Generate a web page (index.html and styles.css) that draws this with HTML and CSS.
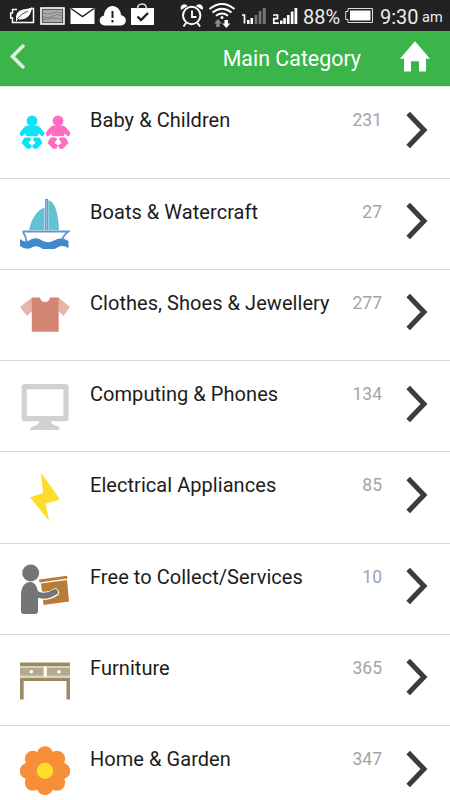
FILE: index.html
```html
<!DOCTYPE html>
<html lang="en">
<head>
<meta charset="utf-8">
<title>Main Category</title>
<link rel="stylesheet" href="styles.css">
</head>
<body>
<svg class="defs" width="0" height="0">
  <symbol id="chevron" viewBox="0 0 22 38"><path d="M2.200 2.500 18 19 2.200 35.500" fill="none" stroke="#3c3c3c" stroke-width="5"/></symbol>
  <symbol id="baby" viewBox="0 0 25 50">
    <circle cx="12" cy="13.800" r="5.400"/>
    <path d="M8 18.500h8q2.500 0 4 2l5 6-2.500 3-4.500-3v2.200q-6 1.300-12 0v-2.200l-4.500 3-2.500-3 5-6q1.500-2 4-2z"/>
    <path d="M4 31q3.500-1.500 6.500 0l.5 1.500-2.500 3.500 3.500 2.500-1.500 3.300H7L1.500 36zM20 31q-3.500-1.500-6.500 0l-.5 1.500 2.500 3.500-3.500 2.500 1.500 3.300H17l5.500-5.800z"/>
  </symbol>
</svg>
<div class="status">
  <svg class="tray" width="160" height="31" viewBox="0 0 160 31">
    <path d="M17 9.500H12.500V13H10.700v5h1.800v4.500h21V8.500H31" fill="none" stroke="#fff" stroke-width="1.500"/>
    <path d="M16 20q-1-9 7-10.500 5-.5 9-2-1 7-5 10-4 3-9 1.500l-2 3z" fill="#fff"/><path d="M17 19q5-6 11-8" fill="none" stroke="#222" stroke-width=".8"/>
    <rect x="41" y="8" width="23" height="16" fill="#555" stroke="#fff" stroke-width="1.600"/>
    <path d="M43 10h19v12H43z" fill="#aaa"/><path d="M43 13q5 2 10 0t9 0M43 17q5 2 10-1t9 0M43 20q8-3 19-1" fill="none" stroke="#777" stroke-width=".8"/>
    <path d="M70.500 8h24v16h-24z" fill="#fff"/><path d="m71 8.500 11.500 8 11.500-8" fill="none" stroke="#222" stroke-width="1.500"/>
    <path d="M105 25.500c-7 0-7-9-1-10 0-5 4-9.500 8.500-9.500s8.500 4.500 8.500 9c7 1.500 6 10.500 0 10.500z" fill="#fff"/><path d="M112.500 11v7M112.500 20v2.500" stroke="#222" stroke-width="2"/>
    <path d="M131 8h23v17h-23z" fill="#fff"/><path d="M137.500 9q0-5 4.500-5t4.500 5" fill="none" stroke="#ddd" stroke-width="1.600"/><path d="m137.500 16.500 3.500 3.500 7-7" fill="none" stroke="#222" stroke-width="2.400"/>
  </svg>
  <svg class="signal" width="142" height="31" viewBox="160 0 142 31">
    <circle cx="191.700" cy="15.500" r="8.700" fill="none" stroke="#fff" stroke-width="2"/><path d="M192 10.500V17h4.500" fill="none" stroke="#fff" stroke-width="1.800"/>
    <path d="M181 10q-1.500-4 2-5.500 3-1 4.500 1.500zM202.500 10q1.500-4-2-5.500-3-1-4.500 1.500z" fill="#fff"/><path d="m186 23-2.500 3.500M197.500 23l2.500 3.500" stroke="#fff" stroke-width="2"/>
    <path d="M209.500 9q12.500-10 25 0M212.500 12.500q9.500-7.500 19 0M216 15.800q6-4.500 12 0" fill="none" stroke="#fff" stroke-width="2"/><circle cx="222" cy="17.500" r="1.500" fill="#fff"/>
    <path d="m218 19 4 4.500h-2.300V27h-3.400v-3.500H214z" fill="#888"/><path d="M224.500 20h3.500v3.500h2.300l-4 4.500-4-4.500h2.200z" fill="#fff"/>
    <path d="M242 15h2.500v8.500" fill="none" stroke="#fff" stroke-width="1.700"/><path d="M247 20h2.500v4H247zM250.500 18h2.500v6h-2.500z" fill="#fff"/><path d="M254.600 15h2.700v9h-2.700zM258.700 11h2.700v13h-2.700zM262.800 8h3v16h-3z" fill="#777"/>
    <path d="M273 15h4.500v3.700h-3.700v4.500h5" fill="none" stroke="#fff" stroke-width="1.700"/><path d="M280 20.500h2.500V24H280zM283.300 18h2.500v6h-2.500zM286.900 15h2.700v9h-2.700zM290.800 11.500h2.700V24h-2.700zM294.500 8h2.800v16h-2.800z" fill="#fff"/>
  </svg>
  <span class="percent">88%</span>
  <svg class="battery" width="30" height="31" viewBox="344 0 30 31"><path d="M348 8.500h24.500v14H348v-3h-2.300v-8H348z" fill="none" stroke="#ddd"/><path d="M350 10.500h20.500v10H350z" fill="#fff"/></svg>
  <span class="time">9:30</span><span class="ampm">am</span>
</div>
<header class="header">
  <svg class="back" width="15" height="26" viewBox="0 0 15 26"><path d="M14 2 2.500 13.500l11.500 11.500" fill="none" stroke="#d8f3da" stroke-width="3.600"/></svg>
  <h1 class="title">Main Category</h1>
  <svg class="home" width="30" height="31" viewBox="0 0 30 31"><path d="m15 .3 15 17.400h-4v12.900h-7V20.300h-8v10.300H4V17.700H0z" fill="#fff"/></svg>
</header>
<main class="list">
  <div class="row">
    <svg class="icon" viewBox="0 0 50 50"><use href="#baby" x="0" width="25" height="50" fill="#0de3f5"/><use href="#baby" x="26" width="25" height="50" fill="#ff6dc3"/></svg>
    <span class="name">Baby &amp; Children</span><span class="count">231</span><svg class="chevron"><use href="#chevron"/></svg>
  </div>
  <div class="row">
    <svg class="icon" viewBox="0 0 50 50"><path d="M9 31q4-18 15.500-22.500V31zM28.300 1Q38 4 39 31H28.300z" fill="#62c1d2"/><path d="M26.500 0v31" stroke="#5a8dcc" stroke-width="2.800"/><path d="M26.500 1v30" stroke="#b7d3ee" stroke-width=".7"/><path d="M2.500 32.500h46q-5 3-7.500 11M3 33q3 4 3.500 10" fill="none" stroke="#5c95d0" stroke-width="1.900"/><path d="M0 40q4 4 9 1.500 7-4.500 13 0 6 3.500 12 0 7-4 14.500.5v7q-7-4-12 0-7 4-13.500 1-7-5-12-1-6 2-11-2z" fill="#4388cb"/></svg>
    <span class="name">Boats &amp; Watercraft</span><span class="count">27</span><svg class="chevron"><use href="#chevron"/></svg>
  </div>
  <div class="row">
    <svg class="icon" viewBox="0 0 50 50"><path d="M12 7.500 0 17l7 9 5-5zM38.500 7.500 50 17l-6.500 9-5-5z" fill="#e5b5aa"/><path d="M11.800 7.500H20q1 4.500 5 4.500t5-4.500h8.700v34.300H11.800z" fill="#d48573"/></svg>
    <span class="name">Clothes, Shoes &amp; Jewellery</span><span class="count">277</span><svg class="chevron"><use href="#chevron"/></svg>
  </div>
  <div class="row">
    <svg class="icon" viewBox="0 0 50 50"><rect x="4.200" y="5.700" width="41.800" height="32" rx="1" fill="none" stroke="#d1d1d1" stroke-width="5.300"/><path d="M19 39h12q-1 4 6 6 2.500.5 2.500 4h-29.500q0-3 4-4 6-2 5-6z" fill="#d1d1d1"/></svg>
    <span class="name">Computing &amp; Phones</span><span class="count">134</span><svg class="chevron"><use href="#chevron"/></svg>
  </div>
  <div class="row">
    <svg class="icon" viewBox="0 0 50 50"><path d="M20.800.5 34.500 19.500 40 27.500 25.500 31.800 29 49 10 25.300 23.200 21z" fill="#ffdc2b"/></svg>
    <span class="name">Electrical Appliances</span><span class="count">85</span><svg class="chevron"><use href="#chevron"/></svg>
  </div>
  <div class="row">
    <svg class="icon" viewBox="0 0 50 50"><path d="m19 15.500 28-3.700.5 2.700-28 4zM21 19.500l26-3.500 2 21.500-25.500 3.500z" fill="#b97b39"/><path d="M16 29q9 6 19-.5" fill="none" stroke="#fff" stroke-width="8" stroke-linecap="round"/><circle cx="10.700" cy="9" r="8.500" fill="#747675"/><path d="M1 47V30q1-12 9.500-12 5 0 7.500 9v20q0 3-3 3H4q-3 0-3-3z" fill="#747675"/><path d="M15 29q9 6 20-1" fill="none" stroke="#747675" stroke-width="5.800" stroke-linecap="round"/></svg>
    <span class="name">Free to Collect/Services</span><span class="count">10</span><svg class="chevron"><use href="#chevron"/></svg>
  </div>
  <div class="row">
    <svg class="icon" viewBox="0 0 50 50"><path d="M0 7.500h50v3.500H0zM0 22.800h50v3.200H0z" fill="#998c62"/><path d="M0 11h50v11.800H0z" fill="#d8d0b8"/><path d="M0 13h23.500v7.500H0zM27 13h23v7.500H27z" fill="#b4a98d"/><path d="M23.800 11.500h3v10h-3z" fill="#fff"/><circle cx="11.300" cy="16.800" r="1.800" fill="#fff"/><circle cx="39" cy="16.800" r="1.800" fill="#fff"/><path d="M0 25h3.700v19.500H0zM46.500 25H50v19.500h-3.500z" fill="#9b8c61"/></svg>
    <span class="name">Furniture</span><span class="count">365</span><svg class="chevron"><use href="#chevron"/></svg>
  </div>
  <div class="row">
    <svg class="icon" viewBox="0 0 50 50"><g fill="#f68f38"><circle cx="25" cy="25" r="20"/><circle cx="25" cy="8.500" r="8.300"/><circle cx="37.200" cy="12.800" r="8"/><circle cx="42" cy="25" r="8.200"/><circle cx="37.200" cy="36.800" r="8"/><circle cx="25" cy="41" r="8.300"/><circle cx="12.800" cy="36.800" r="8"/><circle cx="8" cy="25" r="8.200"/><circle cx="12.800" cy="12.800" r="8"/></g><circle cx="25" cy="24.700" r="8.200" fill="#ffdc2b"/></svg>
    <span class="name">Home &amp; Garden</span><span class="count">347</span><svg class="chevron"><use href="#chevron"/></svg>
  </div>
</main>
</body>
</html>
```
FILE: styles.css
```css
* { box-sizing: border-box; }
body {
  margin: 0;
  width: 450px;
  height: 800px;
  overflow: hidden;
  background: #fff;
  font-family: Roboto, "Liberation Sans", sans-serif;
}
svg { display: block; flex: none; }
.defs { display: none; }
.status {
  display: flex;
  height: 31px;
  background: #222;
  color: #ececec;
  white-space: nowrap;
}
.percent { width: 42px; font-size: 20px; line-height: 34px; padding-left: 1px; }
.battery { margin-right: 6px; }
.time { width: 42px; font-size: 20px; line-height: 34px; }
.ampm { font-size: 14.5px; line-height: 36px; }
.header {
  display: flex;
  align-items: flex-start;
  height: 56.25px;
  padding: 0 20px 0 10px;
  background: #3bb54a;
  border-bottom: 1px solid #e2e8e2;
  color: #fff;
}
.back { margin-top: 12px; }
.title {
  flex: 1;
  margin: 0 39px 0 0;
  text-align: right;
  font-size: 21.4px;
  font-weight: 400;
  line-height: 56px;
}
.home { margin-top: 10px; }
.row {
  display: flex;
  height: 91.25px;
  padding: 20px 22.5px 0 20px;
  border-bottom: 1.5px solid #d8d8d8;
}
.icon { width: 50px; height: 50px; margin-right: 20px; }
.name {
  flex: 1;
  font-size: 20px;
  line-height: 27px;
  letter-spacing: 0.05px;
  color: #1c1c1c;
  white-space: nowrap;
}
.count { font-size: 17.5px; line-height: 27px; color: #a4a4a4; }
.chevron { width: 22px; height: 38px; margin: 3.5px 0 0 23.5px; }
```
